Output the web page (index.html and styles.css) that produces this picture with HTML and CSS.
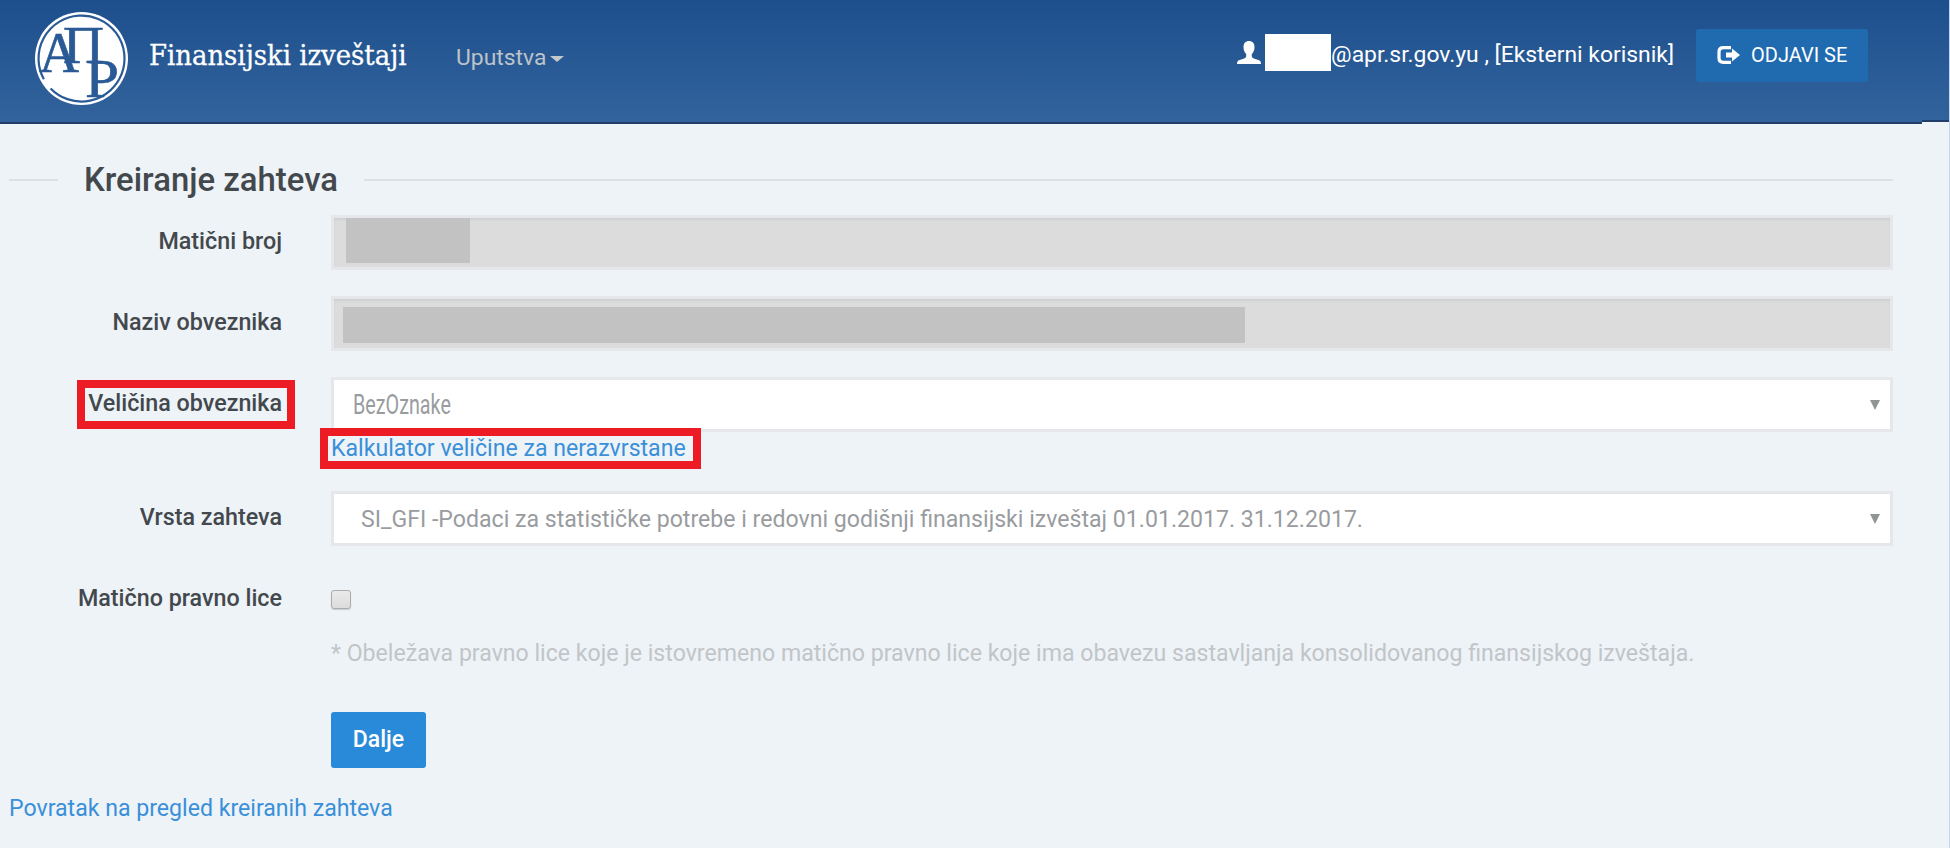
FILE: index.html
```
<!DOCTYPE html>
<html lang="sr">
<head>
    <meta charset="UTF-8">
    <meta name="viewport" content="width=device-width, initial-scale=1.0">
    <title>Finansijski izveštaji</title>
    <link rel="stylesheet" href="styles.css">
</head>
<body>
    <header class="navbar">
        <svg class="logo" viewBox="0 0 93 93">
            <circle cx="46.5" cy="46.5" r="46.5" fill="#fff"/>
            <path d="M6.100 61.200A43 43 0 1 1 11.300 71.200" fill="none" stroke="#2a5a96" stroke-width="2.2" transform="rotate(-9 46.500 46.500)"/>
            <g fill="#2a5a96" stroke="#2a5a96" stroke-width="0.6" font-family="Liberation Serif, serif">
                <text x="4" y="60" font-size="57" textLength="40" lengthAdjust="spacingAndGlyphs">А</text>
                <text x="28" y="51" font-size="52" textLength="41" lengthAdjust="spacingAndGlyphs">П</text>
                <text x="50" y="85" font-size="54" textLength="34" lengthAdjust="spacingAndGlyphs">Р</text>
            </g>
        </svg>
        <div class="brand">Finansijski izveštaji</div>
        <div class="menu">Uputstva<span class="caret"></span></div>
        <div class="user">
            <svg class="user-icon" viewBox="0 0 24 23">
                <path d="M12 0C8.600 0 6.500 2.300 6.500 6c0 3 1 5.500 2.700 7v2.300c0 1-.8 1.600-2 2.100L2 19.300C.6 20 0 21 0 23h24c0-2-.6-3-2-3.700l-5.200-1.900c-1.200-.5-2-1.100-2-2.100V13c1.700-1.500 2.700-4 2.700-7C17.500 2.300 15.400 0 12 0z" fill="#fff"/>
            </svg>
            <span class="user-mask"></span>
            <span class="user-name">@apr.sr.gov.yu , [Eksterni korisnik]</span>
        </div>
        <button class="logout">
            <svg class="logout-icon" viewBox="0 0 23 18">
                <path d="M14 1.700H6.500C3.500 1.700 2 3.200 2 6v6c0 2.800 1.500 4.300 4.500 4.300H14" fill="none" stroke="#fff" stroke-width="3.200"/>
                <path d="M9 6.500h6V2.600L23 9l-8 6.400v-3.900H9z" fill="#fff"/>
            </svg>
            <span>ODJAVI SE</span>
        </button>
    </header>

    <main class="content">
        <h1 class="title">Kreiranje zahteva</h1>

        <div class="row">
            <label>Matični broj</label>
            <div class="field disabled"><span class="mask mask-short"></span></div>
        </div>

        <div class="row">
            <label>Naziv obveznika</label>
            <div class="field disabled"><span class="mask mask-long"></span></div>
        </div>

        <div class="row row-size">
            <label class="marked">Veličina obveznika</label>
            <div>
                <div class="field select"><span class="narrow">BezOznake</span></div>
                <a class="calc-link marked">Kalkulator veličine za nerazvrstane</a>
            </div>
        </div>

        <div class="row">
            <label>Vrsta zahteva</label>
            <div class="field select"><span class="value">SI_GFI -Podaci za statističke potrebe i redovni godišnji finansijski izveštaj 01.01.2017. 31.12.2017.</span></div>
        </div>

        <div class="row row-last">
            <label>Matično pravno lice</label>
            <div>
                <input type="checkbox" class="check">
                <p class="help">* Obeležava pravno lice koje je istovremeno matično pravno lice koje ima obavezu sastavljanja konsolidovanog finansijskog izveštaja.</p>
                <button class="next">Dalje</button>
            </div>
        </div>

        <a class="back-link">Povratak na pregled kreiranih zahteva</a>
    </main>
</body>
</html>
```
FILE: styles.css
```
*,
*::before,
*::after {
    margin: 0;
    padding: 0;
    box-sizing: border-box;
}
body {
    font-family: Roboto, sans-serif;
    font-size: 23.120px;
    background-color: #eef3f7;
    color: #43484d;
    height: 848px;
    overflow: hidden;
    border-right: 1px solid #c3d6ee;
}
a {
    color: #3a8fd9;
}

/* top bar */
.navbar {
    position: relative;
    display: flex;
    height: 124px;
    margin-right: -1px;
    padding-left: 35px;
    background: linear-gradient(#1d4f8d, #32639c);
    border-bottom: 2px solid #213d69;
    color: #fff;
}
.navbar::after {
    content: "";
    position: absolute;
    right: 0;
    bottom: -2px;
    width: 28px;
    height: 4px;
    background: #eef3f7;
    border-top: 2px solid #213d69;
}
.logo {
    width: 93px;
    height: 93px;
    margin-top: 12px;
}
.brand {
    font-family: "DejaVu Serif Condensed", "DejaVu Serif", serif;
    font-size: 28.800px;
    line-height: 40px;
    margin: 35px 0 0 21px;
    width: 307px;
    white-space: nowrap;
    -webkit-text-stroke: 0.3px #fff;
}
.menu {
    display: flex;
    align-items: center;
    height: 40px;
    margin-top: 37px;
    font-size: 22.900px;
    color: #bdc3c9;
}
.caret {
    margin: 4px 0 0 4px;
    border: 7px solid transparent;
    border-top: 6px solid #c3c8cd;
    border-bottom: 0;
}
.user {
    display: flex;
    align-items: center;
    height: 37px;
    margin: 34px 22px 0 auto;
    font-size: 22.900px;
    white-space: nowrap;
}
.user-icon {
    width: 24px;
    height: 23px;
}
.user-mask {
    width: 66px;
    height: 37px;
    margin-left: 4px;
    background: #fff;
}
.user-name {
    padding-top: 4px;
}
.logout {
    display: flex;
    align-items: center;
    width: 172px;
    height: 53px;
    margin: 29px 82px 0 0;
    padding: 0 0 1px 21px;
    border: 0;
    border-radius: 3px;
    background: #206bb0;
    color: #fff;
    font-family: Roboto, sans-serif;
    font-size: 20px;
    white-space: nowrap;
}
.logout-icon {
    width: 23px;
    height: 18px;
    margin-right: 11px;
}

/* form */
.content {
    padding: 36px 56px 0 9px;
}
.title {
    display: flex;
    align-items: center;
    gap: 26px;
    height: 40px;
    margin-bottom: 15px;
    font-size: 32.900px;
    font-weight: 500;
    line-height: 40px;
}
.title::before,
.title::after {
    content: "";
    height: 2px;
    background: #dde1e5;
}
.title::before {
    width: 49px;
}
.title::after {
    flex: 1;
}
.row {
    display: grid;
    grid-template-columns: 273px 1562px;
    column-gap: 49px;
    margin-bottom: 26px;
}
.row-size {
    margin-bottom: 27px;
}
.row-last {
    margin-bottom: 25px;
}
.row label {
    justify-self: end;
    height: 52px;
    line-height: 52px;
    font-size: 23.300px;
    font-weight: 500;
}
.field {
    display: flex;
    align-items: center;
    height: 55px;
    border: 3px solid #e5e7ea;
    background: #fff;
    color: #999c9f;
    white-space: nowrap;
}
.disabled {
    background: #dcdcdc;
    box-shadow: inset 0 2px 2px #cfd0d1;
}
.mask {
    background: #c2c2c2;
}
.mask-short {
    width: 124px;
    height: 45px;
    margin: 0 0 4px 12px;
}
.mask-long {
    width: 902px;
    height: 36px;
    margin: 3px 0 0 9px;
}
.select {
    justify-content: space-between;
    padding-right: 10px;
}
.select::after {
    content: "";
    border: 5px solid transparent;
    border-top: 10px solid #909596;
    border-bottom: 0;
}
.narrow {
    margin-left: 19px;
    font-size: 28px;
    transform: scaleX(0.705);
    transform-origin: left;
}
.value {
    margin-left: 27px;
    padding-top: 2px;
}
.calc-link {
    display: inline-block;
    height: 32px;
    line-height: 33px;
    vertical-align: top;
}

/* red highlight frames */
.marked {
    position: relative;
}
.marked::after {
    content: "";
    position: absolute;
    border: 8px solid #ed1c24;
}
label.marked::after {
    top: 3px;
    right: -13px;
    width: 218px;
    height: 49px;
}
.calc-link.marked::after {
    top: -4px;
    left: -11px;
    width: 381px;
    height: 41px;
}

.check {
    display: block;
    appearance: none;
    width: 20px;
    height: 19px;
    margin-top: 18px;
    border: 1.500px solid #a9abad;
    border-radius: 3px;
    background: linear-gradient(#eaeaea, #dcdcdc);
    box-shadow: 0 1px 1px #c9cccf;
}
.help {
    margin-top: 29px;
    line-height: 32px;
    color: #c1c5c8;
    white-space: nowrap;
}
.next {
    display: block;
    width: 95px;
    height: 56px;
    margin-top: 42px;
    padding-bottom: 2px;
    border: 0;
    border-radius: 3px;
    background: #288ad8;
    color: #fff;
    font-family: Roboto, sans-serif;
    font-size: 23px;
    font-weight: 500;
}
.back-link {
    display: block;
    line-height: 32px;
}
```
